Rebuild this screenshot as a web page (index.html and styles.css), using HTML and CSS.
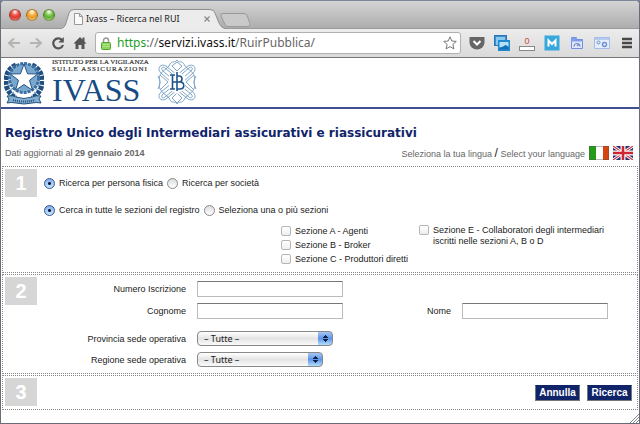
FILE: index.html
```html
<!DOCTYPE html>
<html lang="it">
<head>
<meta charset="utf-8">
<title>Ivass – Ricerca nel RUI</title>
<link rel="stylesheet" href="styles.css">
</head>
<body>
<div class="window">
  <header class="tabbar">
    <div class="lights">
      <button class="light red" aria-label="Chiudi"></button>
      <button class="light amber" aria-label="Riduci"></button>
      <button class="light green" aria-label="Ingrandisci"></button>
    </div>
    <div class="tab">
      <svg class="tab-shape" viewBox="0 0 166 20" preserveAspectRatio="none" aria-hidden="true">
        <path d="M0 20C4 19 5 17 6 14L9 4Q10 0.5 14 0.5H150Q154 0.5 155 4L159 14Q161 19 166 20Z" fill="#ececec"/>
        <path d="M0 20C4 19 5 17 6 14L9 4Q10 0.5 14 0.5H150Q154 0.5 155 4L159 14Q161 19 166 20" fill="none" stroke="#8e8e8e"/>
      </svg>
      <svg class="page-icon" viewBox="0 0 9 12" aria-hidden="true"><path d="M.5.5h5l3 3v8h-8zM5.500.5v3h3" fill="#fafafa" stroke="#999"/></svg>
      <span class="tab-title">Ivass – Ricerca nel RUI</span>
      <button class="tab-close" aria-label="Chiudi scheda"><svg viewBox="0 0 6 6"><path d="M.5.5l5 5M5.500.5l-5 5" stroke="#888" stroke-width="1.200"/></svg></button>
    </div>
    <button class="new-tab" aria-label="Nuova scheda"><svg viewBox="0 0 30 14"><path d="M3 .5h21q2 0 3 2l3 8q0 3-2 3H8q-2 0-3-2L1 3Q0 .5 3 .5z" fill="#c9c9c9" stroke="#999"/></svg></button>
  </header>

  <nav class="toolbar">
    <button class="tool" aria-label="Indietro"><svg viewBox="0 0 14 14"><path d="M7 2.500L2 7l5 4.500M2.500 7H13" fill="none" stroke="#b4b4b4" stroke-width="2"/></svg></button>
    <button class="tool" aria-label="Avanti"><svg viewBox="0 0 14 14"><path d="M7 2.500L12 7l-5 4.500M11.500 7H1" fill="none" stroke="#b4b4b4" stroke-width="2"/></svg></button>
    <button class="tool" aria-label="Ricarica"><svg viewBox="0 0 14 14"><path d="M11 4A5 5 0 1 0 12 9" fill="none" stroke="#555" stroke-width="2.200"/><path d="M12.800 1v5.500H7.300z" fill="#555"/></svg></button>
    <button class="tool" aria-label="Pagina iniziale"><svg viewBox="0 0 14 14"><path d="M7 1l2.500 2.500V1.500h2v4L13.500 7.500h-2V13H8.500V9h-3v4h-3V7.500h-2z" fill="#555"/></svg></button>
    <div class="omnibox">
      <svg class="lock" viewBox="0 0 10 13" aria-hidden="true"><path d="M2.500 6V3.500a2.500 2.500 0 0 1 5 0V6" fill="none" stroke="#999" stroke-width="1.500"/><rect x=".5" y="5.500" width="9" height="7" rx="1" fill="#8ed45c" stroke="#56a530"/><path d="M1.500 7.500h7M1.500 9.500h7" stroke="#b5e890" stroke-width=".8"/></svg>
      <div class="url" role="textbox" contenteditable="true" spellcheck="false" aria-label="Indirizzo"><span class="url-scheme">https</span><span class="url-rest">://</span>servizi.ivass.it<span class="url-rest">/RuirPubblica/</span></div>
      <button class="tool" aria-label="Preferiti"><svg viewBox="0 0 14 14"><path d="M7 .8l1.800 4.200 4.500.4-3.400 3 1 4.500L7 10.600l-3.900 2.300 1-4.500-3.400-3 4.500-.4z" fill="#fff" stroke="#777"/></svg></button>
    </div>
    <div class="extensions">
      <button class="ext" aria-label="Pocket"><svg viewBox="0 0 16 16"><path d="M.5 2h15v5.500a7.500 7 0 0 1-15 0z" fill="#666"/><path d="M4.500 6L8 9.500 11.500 6" fill="none" stroke="#fff" stroke-width="2"/></svg></button>
      <button class="ext" aria-label="Immagini"><svg viewBox="0 0 16 16"><rect x=".5" y=".5" width="12" height="10" fill="#438dc6" stroke="#2777b6"/><path d="M2 2h9v3H5v5H2z" fill="#8bcaf0"/><rect x="4" y="5" width="12" height="11" fill="#2189d0"/><path d="M5.500 7h9v5l-3-2-2 1.500-4 1z" fill="#b8e0f8"/><path d="M5.500 13l4-1.500 2-1.500 3 2v2.500h-9z" fill="#1570b8"/></svg></button>
      <button class="ext counter" aria-label="Contatore: 0"><span class="count">0</span><span class="count-bar"></span></button>
      <button class="ext" aria-label="M"><svg viewBox="0 0 16 16"><path d="M.5.5h15v15H.5z" fill="#38a8dc"/><path d="M4.500 11.500V5.500L8 9l3.500-3.500v6" fill="none" stroke="#fff" stroke-width="2"/></svg></button>
      <button class="ext" aria-label="Cartella"><svg viewBox="0 0 16 16"><path d="M2.500 2.500h5v2h6v9h-11z" fill="#dfe7fc" stroke="#7390e0"/><path d="M2 3h6v2h6v1.500H2z" fill="#829ce8"/><path d="M5 11.500a3 3 0 1 1 6 0M8 11l2-2" fill="none" stroke="#7385bd" stroke-width="1.200"/></svg></button>
      <button class="ext" aria-label="Impostazioni"><svg viewBox="0 0 16 16"><path d="M.5 2.500h15v11H.5z" fill="#e5edfb" stroke="#a5bde9"/><path d="M1 3h14v2H1z" fill="#b6caef"/><circle cx="4.500" cy="7.500" r="1.500" fill="none" stroke="#6e8ecc"/><circle cx="10.500" cy="9.500" r="2" fill="none" stroke="#6e8ecc" stroke-width="1.400"/></svg></button>
      <button class="ext" aria-label="Menu"><svg viewBox="0 0 16 16"><path d="M3 4h10M3 8h10M3 12h10" stroke="#484848" stroke-width="2.400"/></svg></button>
    </div>
  </nav>

  <main class="page">
    <div class="brand">
      <svg class="emblem" viewBox="0 0 40 46" aria-hidden="true">
        <path d="M12 6C3 10 0 19 3 29q3 7 9 10M28 6c9 4 12 13 9 23q-3 7-9 10" fill="none" stroke="#214f82" stroke-width="5" stroke-dasharray="4 1"/>
        <path d="M10 7C3 15 3 27 11 36M30 7c7 8 7 20-1 29" fill="none" stroke="#77a4c9" stroke-width="1.500" stroke-dasharray="2 2"/>
        <circle cx="20" cy="19" r="14.500" fill="#83b0d4" stroke="#3a6e9f" stroke-width="3" stroke-dasharray="3 1"/>
        <circle cx="20" cy="19" r="12" fill="#78a6cd"/>
        <path d="M20 5l3.500 9.800 10.200.2-8.200 6.300 3 10L20 25.500l-8.500 5.800 3-10L6.300 15l10.200-.2z" fill="#fff" stroke="#245687"/>
        <path d="M3 37q6-1 9 1 8 3 16 0 4-2 9-1l-2 3 2 4q-5-1-9 0-8 2-16 0-5-1-9 0l2-4z" fill="#82aed2" stroke="#234f7d"/>
        <path d="M9 41q11 3 22 0" fill="none" stroke="#234f7d" stroke-width="2" stroke-dasharray="1 1"/>
      </svg>
      <div class="wordmark">
        <span class="word-small">ISTITUTO PER LA VIGILANZA</span>
        <span class="word-small spaced">SULLE ASSICURAZIONI</span>
        <span class="word-large">IVASS</span>
      </div>
      <svg class="ornament" viewBox="0 0 40 46" aria-hidden="true">
        <g fill="none" stroke="#7fa6c9" stroke-width="1">
          <path d="M4 14C-1 9 4 4 9 7l11 9 11-9c5-3 10 2 5 7L25 24l11 9c5 5 0 10-5 7L20 31 9 40c-5 3-10-2-5-7l11-9z"/>
          <path d="M6 12C3 9 6 7 8 9l12 10L32 9c2-2 5 0 2 3L20 24l14 11c3 3 0 5-2 3L20 28 8 38c-2 2-5 0-2-3l14-11z"/>
          <path d="M12 7C15 0 18 5 20 1c2 4 5-1 8 6 5 5 12 8 9 16 3 8-4 11-9 16-3 7-6 2-8 6-2-4-5 1-8-6-5-5-12-8-9-16-3-8 4-11 9-16z"/>
          <path d="M15 7l5-4 5 4-5 5zM15 39l5-5 5 5-5 5zM1 17q4 6 0 13M39 17q-4 6 0 13"/>
          <path d="M3 16l8 7-8 8M37 16l-8 7 8 8"/>
        </g>
        <path d="M20 12l8 5v13l-8 5-8-5V17z" fill="#fff"/>
        <path d="M13 16h5M13 30h5M15.500 16v14M20 13v19M20 17h2c4 0 4 6 0 6h-6h7c5 0 5 7 0 7h-3" fill="none" stroke="#1e538b" stroke-width="1.600"/>
      </svg>
    </div>

    <h1 class="title">Registro Unico degli Intermediari assicurativi e riassicurativi</h1>
    <div class="subline">
      <p class="updated">Dati aggiornati al <b>29 gennaio 2014</b></p>
      <div class="languages">
        <span>Seleziona la tua lingua <span class="slash">/</span> Select your language</span>
        <a href="#it" aria-label="Italiano"><svg class="flag" viewBox="0 0 20 14"><path d="M0 0h20v14H0z" fill="#fff"/><path d="M0 0h7v14H0z" fill="#269b17"/><path d="M14 0h6v14h-6z" fill="#d64410"/><path d="M.5.5h19v13H.5z" fill="none" stroke="#555" stroke-opacity=".4"/></svg></a>
        <a href="#en" aria-label="English"><svg class="flag" viewBox="0 0 20 14"><path d="M0 0h20v14H0z" fill="#233476"/><path d="M0 0l20 14M20 0L0 14" stroke="#fff" stroke-width="3"/><path d="M0 0l20 14M20 0L0 14" stroke="#d33a42" stroke-width="1.200"/><path d="M10 0v14M0 7h20" stroke="#fff" stroke-width="5"/><path d="M10 0v14M0 7h20" stroke="#cc2630" stroke-width="2.600"/></svg></a>
      </div>
    </div>

    <form class="search">
      <section class="step">
        <span class="number">1</span>
        <div class="choices">
          <div class="radio-row">
            <label class="option"><input type="radio" name="tipo" checked>Ricerca per persona fisica</label>
            <label class="option"><input type="radio" name="tipo">Ricerca per società</label>
          </div>
          <div class="radio-row">
            <label class="option"><input type="radio" name="ambito" checked>Cerca in tutte le sezioni del registro</label>
            <label class="option"><input type="radio" name="ambito">Seleziona una o più sezioni</label>
          </div>
          <div class="sections">
            <div class="section-list">
              <label class="option"><input type="checkbox">Sezione A - Agenti</label>
              <label class="option"><input type="checkbox">Sezione B - Broker</label>
              <label class="option"><input type="checkbox">Sezione C - Produttori diretti</label>
            </div>
            <label class="option tall"><input type="checkbox"><span>Sezione E - Collaboratori degli intermediari<br>iscritti nelle sezioni A, B o D</span></label>
          </div>
        </div>
      </section>

      <section class="step">
        <span class="number">2</span>
        <div class="fields">
          <label class="first" for="numero">Numero Iscrizione</label>
          <input class="text" id="numero" type="text">
          <label class="first" for="cognome">Cognome</label>
          <input class="text" id="cognome" type="text">
          <label for="nome">Nome</label>
          <input class="text" id="nome" type="text">
          <label class="first lower" for="provincia">Provincia sede operativa</label>
          <select class="menu lower" id="provincia"><option>– Tutte –</option></select>
          <label class="first" for="regione">Regione sede operativa</label>
          <select class="menu short" id="regione"><option>– Tutte –</option></select>
        </div>
      </section>

      <section class="step">
        <span class="number">3</span>
        <div class="actions">
          <button class="action" type="reset">Annulla</button>
          <button class="action" type="submit">Ricerca</button>
        </div>
      </section>
    </form>
    <svg class="grip" viewBox="0 0 10 10" aria-hidden="true"><path d="M1 10l9-9M4 10l6-6M7 10l3-3" stroke="#888"/></svg>
  </main>
</div>
</body>
</html>
```

FILE: styles.css
```css
* { box-sizing: border-box; }

body {
  margin: 0;
  background: #778195;
  font: 9px/12px "Liberation Sans", Arial, sans-serif;
  color: #222;
}

button { padding: 0; border: 0; background: none; font: inherit; }
svg { display: block; }

.window {
  display: flex;
  flex-direction: column;
  min-height: 100vh;
  border: 1px solid #696d7a;
  border-top-color: #7d8799;
  border-radius: 5px 5px 0 0;
  overflow: hidden;
  background: #fff;
}

/* Browser frame */
.tabbar {
  display: flex;
  align-items: flex-end;
  height: 28px;
  padding-left: 8px;
  background: linear-gradient(#d4d4d4, #adadad);
  border-bottom: 1px solid #999;
}

.lights { display: flex; gap: 5px; align-self: center; }
.light {
  width: 12px;
  height: 12px;
  border-radius: 50%;
  border: 1px solid rgba(60, 30, 20, .4);
}
.red { background: radial-gradient(circle at 50% 20%, #fff 0, #f0584f 35%, #dc3a30 60%, #ff9a8c 100%); }
.amber { background: radial-gradient(circle at 50% 20%, #fff 0, #f5b544 35%, #e59a2c 60%, #ffe68a 100%); }
.green { background: radial-gradient(circle at 50% 20%, #fff 0, #7fcb50 35%, #5fae36 60%, #c4f58a 100%); }

.tab {
  position: relative;
  display: flex;
  align-items: center;
  width: 166px;
  height: 20px;
  margin: 0 -6px -1px 5px;
  padding: 0 16px 0 14px;
}
.tab-shape { position: absolute; inset: 0; width: 100%; height: 100%; }
.page-icon { position: relative; width: 9px; height: 12px; margin-right: 3px; }
.tab-title { position: relative; flex: 1; font: 9px/12px "Noto Sans", sans-serif; white-space: nowrap; color: #222; }
.tab-close { position: relative; width: 6px; height: 6px; }
.new-tab { width: 30px; height: 14px; margin-bottom: 1px; }

.toolbar {
  display: flex;
  align-items: center;
  gap: 8px;
  height: 29px;
  padding: 0 4px 0 6px;
  background: linear-gradient(#ececec, #dadada);
  border-bottom: 1px solid #777;
}
.tool { flex: none; width: 14px; height: 14px; }
.tool svg, .ext svg { width: 100%; height: 100%; }
.omnibox {
  display: flex;
  flex: 1;
  align-items: center;
  gap: 6px;
  height: 22px;
  padding: 0 3px 0 5px;
  background: #fff;
  border: 1px solid #b0b0b0;
  border-radius: 3px;
}
.lock { width: 10px; height: 13px; }
.url { flex: 1; font: 12px/16px "Noto Sans", sans-serif; color: #111; outline: 0; white-space: nowrap; }
.url-scheme { color: #1b9e25; }
.url-rest { color: #666; }
.extensions { display: flex; gap: 9px; }
.ext { width: 16px; height: 16px; }
.counter { display: flex; flex-direction: column; align-items: center; justify-content: flex-end; }
.count { font-size: 9px; line-height: 9px; color: #d04a3c; }
.count-bar { width: 16px; height: 5px; background: #fff; border: 1px solid #888; }

/* Page heading */
.page { position: relative; flex: 1; }
.brand {
  display: flex;
  gap: 8px;
  height: 51px;
  padding: 1px 3px 0;
  border-bottom: 2px solid #40508f;
}
.emblem, .ornament { width: 40px; height: 46px; }
.wordmark {
  display: flex;
  flex-direction: column;
  font-family: "Liberation Serif", "Times New Roman", serif;
  color: #174b83;
  white-space: nowrap;
}
.word-small { font-size: 7px; line-height: 7px; color: #333; -webkit-text-stroke: .2px #333; }
.spaced { letter-spacing: 1px; }
.word-large { font-size: 32px; line-height: 34px; }

.title {
  margin: 16px 4px 5px;
  font: bold 12px/16px "DejaVu Sans", Verdana, sans-serif;
  color: #10246a;
}
.subline {
  display: flex;
  justify-content: space-between;
  align-items: center;
  height: 14px;
  margin: 0 6px 6px 4px;
  color: #666;
}
.updated { margin: 0; }
.languages { display: flex; align-items: center; gap: 4px; }
.slash { font-size: 12px; color: #222; }
.flag { width: 20px; height: 14px; }

/* Search form */
.search { display: flex; flex-direction: column; gap: 1px; margin: 0 1px; }
.step {
  display: flex;
  gap: 7px;
  padding: 2px;
  border: 1px dotted #888;
}
.number {
  flex: none;
  width: 32px;
  height: 28px;
  background: #d6d6d6;
  color: #fff;
  font: bold 20px/28px "Liberation Sans", Arial, sans-serif;
  text-align: center;
}

.choices { flex: 1; padding-top: 8px; }
.radio-row { display: flex; gap: 4px; margin-bottom: 15px; }
.option { display: flex; align-items: center; gap: 4px; height: 12px; }
.option input {
  flex: none;
  appearance: none;
  width: 10px;
  height: 10px;
  margin: 0;
  border: 1px solid #b5b5b5;
  border-radius: 2px;
  background: linear-gradient(#fff, #eee);
}
.option input[type="radio"] {
  width: 11px;
  height: 11px;
  border-color: #888;
  border-radius: 50%;
  background: linear-gradient(#ddd, #fff);
}
.option input[type="radio"]:checked {
  border-color: #385491;
  background: radial-gradient(circle, #111b38 0 1px, transparent 2px), linear-gradient(#83aef0, #c5e8ff);
}
.sections { display: flex; padding: 0 31px 5px 237px; margin-top: -6px; justify-content: space-between; }
.section-list { display: grid; gap: 2px; }
.option.tall { align-items: flex-start; height: auto; line-height: 11px; }

.fields {
  flex: 1;
  display: grid;
  grid-template-columns: 142px 146px 1fr 146px;
  column-gap: 11px;
  row-gap: 6px;
  align-items: center;
  padding: 4px 27px 4px 0;
}
.fields label { text-align: right; }
.fields .first { grid-column: 1; }
.fields .lower { margin-top: 6px; }
.text {
  width: 100%;
  height: 16px;
  padding: 0 2px;
  border: 1px solid #bbb;
  border-top: 1px solid #777;
  background: #fff;
  font: inherit;
}
.menu {
  appearance: none;
  width: 136px;
  height: 15px;
  padding: 0 18px 0 6px;
  border: 1px solid #888;
  border-radius: 4px;
  font: 9px/12px "Noto Sans", sans-serif;
  color: #222;
  background:
    conic-gradient(from 135deg at 50% 0, #102048 90deg, transparent 0) right 4px top 3px / 5px 3px no-repeat,
    conic-gradient(from -45deg at 50% 100%, #102048 90deg, transparent 0) right 4px bottom 3px / 5px 3px no-repeat,
    linear-gradient(#a8c6f2, #5c96e6 50%, #b3deff) right / 14px 100% no-repeat,
    linear-gradient(#fff, #e4e4e4 50%, #fafafa);
}
.menu.short { width: 126px; }

.actions { flex: 1; display: flex; justify-content: flex-end; gap: 7px; padding: 7px 3px 6px 0; }
.action {
  width: 45px;
  height: 16px;
  background: #10246a;
  border: 1px solid #777;
  border-top-color: #10246a;
  color: #fff;
  font: bold 10px/14px "Liberation Sans", Arial, sans-serif;
}
.grip { position: absolute; right: 0; bottom: 0; width: 10px; height: 10px; }
```
